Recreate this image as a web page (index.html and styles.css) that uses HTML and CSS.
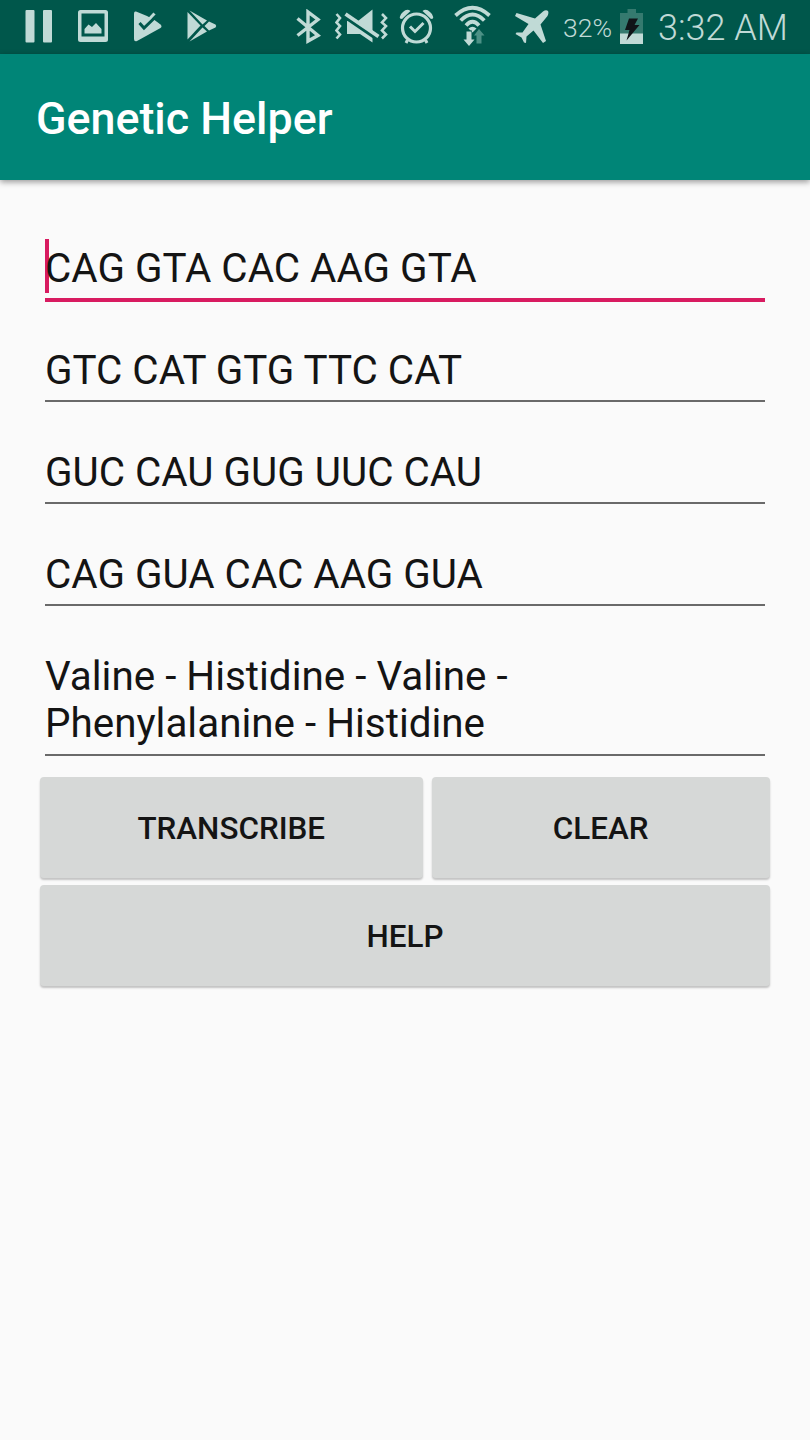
FILE: index.html
```html
<!DOCTYPE html>
<html lang="en">
<head>
    <meta charset="UTF-8">
    <meta name="viewport" content="width=device-width, initial-scale=1.0">
    <title>Genetic Helper</title>
    <link rel="stylesheet" href="styles.css">
</head>
<body>
    <div class="status-bar">
        <div class="notifications">
            <svg width="28" height="34" viewBox="0 0 28 34">
                <rect x="0.5" y="0" width="9" height="32.5" rx="1"/>
                <rect x="18" y="0" width="9" height="32.5" rx="1"/>
            </svg>
            <svg width="31" height="34" viewBox="0 0 31 34">
                <path fill-rule="evenodd" d="M2.5 0H27.500Q30 0 30 2.500V29.500Q30 32 27.500 32H2.500Q0 32 0 29.500V2.500Q0 0 2.500 0ZM3.500 3.500V26.500H26.500V3.500Z"/>
                <path d="M6.500 23.500V19L10.500 14.500L14 17L18 13L23.500 19V23.500Z"/>
            </svg>
            <svg width="30" height="34" viewBox="0 0 30 34">
                <path d="M2 1.500Q0 1 0 3.500V29Q0 32 3 31L26.500 18Q28.500 16.500 26.500 14.500L20.500 10L13 6Z"/>
                <path class="line" stroke-width="3" d="M14 10.500L20.500 3.500"/>
                <path class="cut" stroke-width="3" d="M5.500 13L10 18L22.500 6"/>
            </svg>
            <svg width="32" height="34" viewBox="0 0 32 34">
                <path d="M0.500 2L13.500 15.500L0.500 29.500Z"/>
                <path d="M2.500 0.500L20 10.500L15.500 14.500ZM2.500 31.500L15.500 17.500L20 21.500ZM22 11.500L28.500 14.500Q30 16 28.500 17.500L22 20.500L17.500 16Z"/>
            </svg>
        </div>
        <div class="indicators">
            <svg width="26" height="36" viewBox="0 0 26 36">
                <path class="line" stroke-width="3.400" d="M1.500 9.500L22 26.500L12 32V3L22 10.500L1.500 26.500"/>
            </svg>
            <svg width="54" height="36" viewBox="0 0 54 36">
                <path class="line" stroke-width="2.600" d="M1.500 5L5 9L1.500 13.500L5 17L1.500 21.500L5 25.500L1.500 29.500M47 5L51 9L47 13.500L51 17L47 21.500L51 25.500L47 29.500"/>
                <path d="M12 12H23L37.500 0.500V33.500L25 25H12Z"/>
                <path class="cut" stroke-width="5.500" d="M8 5.500L43 29.500"/>
                <path class="line" stroke-width="3.800" d="M10.500 5L43.500 27.500"/>
            </svg>
            <svg width="36" height="36" viewBox="0 0 36 36">
                <circle class="line" cx="17.500" cy="19" r="14" stroke-width="3.200"/>
                <path class="line" stroke-width="3" d="M11 17.500L16 22.500L24.500 14M8.500 31L7 34M26.500 31L28 34"/>
                <path d="M1 9.500Q0 6 4 3Q8 -1 11.500 2L3 10ZM34 9.500Q35 6 31 3Q27 -1 23.500 2L32 10Z"/>
            </svg>
            <svg class="wifi" width="40" height="42" viewBox="0 0 40 42">
                <path class="line" stroke-width="3.800" d="M1.500 9.500Q18.500 -6 35.500 9.500M6.700 14.500Q18.500 2.500 30.300 14.500M12 19.500Q18.500 12 25 19.500"/>
                <path d="M14.500 22.500Q18.500 19 22.500 22.500L18.500 26.500Z"/>
                <path class="cut-fill" d="M11 24.500H18V32H11Z"/>
                <path d="M12.500 25.500H17.500V33.500H20.500L15 40L9.500 33.500H12.500Z"/>
                <path class="dim" d="M25 23L30.500 29.500H27.500V37.500H22.500V29.500H20Z"/>
            </svg>
            <svg width="36" height="34" viewBox="0 0 36 34">
                <path d="M29 1.500Q32 -0.500 34 1Q35 3 33.500 6L26.500 14.500L32 31L29 33L19.500 20.500L12.500 26.500L12 33L10 32.500L7.500 27.500L1.500 24L2.500 22.500L8.500 22.500L14.500 14L1 6L2.500 3L21 8.500Z"/>
            </svg>
            <span class="battery-level">32%</span>
            <svg class="battery-icon" width="24" height="36" viewBox="0 0 24 36">
                <path class="battery" d="M7.500 0H16V4H23V35H0V4H7.500Z"/>
                <path d="M0 24.500H23V35H0Z"/>
                <path class="bolt" d="M9 9.500H18L14.500 16H19.500L6.500 31.500L9.500 21H5Z"/>
            </svg>
            <span class="clock">3:32 AM</span>
        </div>
    </div>

    <header class="app-bar">
        <h1 class="title">Genetic Helper</h1>
    </header>

    <main class="content">
        <div class="field focused">CAG GTA CAC AAG GTA</div>
        <div class="field">GTC CAT GTG TTC CAT</div>
        <div class="field">GUC CAU GUG UUC CAU</div>
        <div class="field">CAG GUA CAC AAG GUA</div>
        <div class="field">Valine - Histidine - Valine -<br>Phenylalanine - Histidine</div>

        <div class="buttons">
            <button class="btn">TRANSCRIBE</button>
            <button class="btn">CLEAR</button>
            <button class="btn btn-wide">HELP</button>
        </div>
    </main>
</body>
</html>
```
FILE: styles.css
```css
* {
    margin: 0;
    padding: 0;
    box-sizing: border-box;
}

body {
    font-family: Roboto, sans-serif;
    background: #fafafa;
    color: #141414;
    min-height: 100vh;
}

.status-bar {
    display: flex;
    justify-content: space-between;
    height: 54px;
    padding: 0 22px 0 25px;
    background: #00574b;
    color: #c0dad6;
}

.status-bar svg {
    fill: #c0dad6;
    flex: none;
}

.status-bar .line {
    fill: none;
    stroke: #c0dad6;
}

.status-bar .cut {
    fill: none;
    stroke: #00574b;
}

.status-bar .cut-fill {
    fill: #00574b;
}

.status-bar .dim {
    fill: #4c9186;
}

.status-bar .battery {
    fill: #357a6f;
}

.status-bar .bolt {
    fill: #101418;
}

.notifications,
.indicators {
    display: flex;
    align-items: center;
}

.notifications {
    gap: 25px;
}

.notifications svg:last-child {
    margin-left: -2px;
}

.indicators svg {
    margin-right: 13px;
}

.indicators svg:nth-of-type(2) {
    margin-right: 10px;
}

.indicators svg:nth-of-type(3) {
    margin-right: 19px;
}

.indicators svg:nth-of-type(4) {
    margin-right: 20px;
}

.indicators .wifi {
    overflow: visible;
}

.indicators .battery-icon {
    margin-right: 14px;
}

.battery-level {
    width: 57px;
    font-size: 26.5px;
    font-weight: 300;
}

.clock {
    width: 130px;
    padding-top: 1px;
    font-size: 36px;
    font-weight: 300;
    white-space: nowrap;
}

.app-bar {
    display: flex;
    align-items: center;
    height: 126px;
    padding: 2px 36px 0;
    background: #008577;
    box-shadow: 0 2px 6px rgba(0, 0, 0, 0.4);
}

.title {
    color: #fff;
    font-size: 44.8px;
    font-weight: 500;
}

.content {
    padding: 18px 40px 0;
}

.field {
    position: relative;
    margin: 0 5px;
    padding: 46.5px 0 6px;
    border-bottom: 2px solid #6a6a6a;
    font-size: 40.4px;
    line-height: 47.5px;
}

.field.focused {
    border-bottom: 4px solid #d81b60;
    margin-bottom: -2px;
}

/* text cursor */
.field.focused::before {
    content: "";
    position: absolute;
    left: 0;
    top: 41px;
    width: 4px;
    height: 54px;
    background: #d81b60;
    z-index: -1;
}

.buttons {
    display: grid;
    grid-template-columns: 382.5px 1fr;
    gap: 7px 9px;
    margin-top: 21.5px;
}

.btn {
    height: 101px;
    padding-top: 2px;
    border: none;
    border-radius: 4px;
    background: #d6d8d7;
    box-shadow: 0 2px 2px rgba(0, 0, 0, 0.22);
    color: #141414;
    font-family: inherit;
    font-size: 31.4px;
    font-weight: 500;
}

.btn-wide {
    grid-column: span 2;
}
```
